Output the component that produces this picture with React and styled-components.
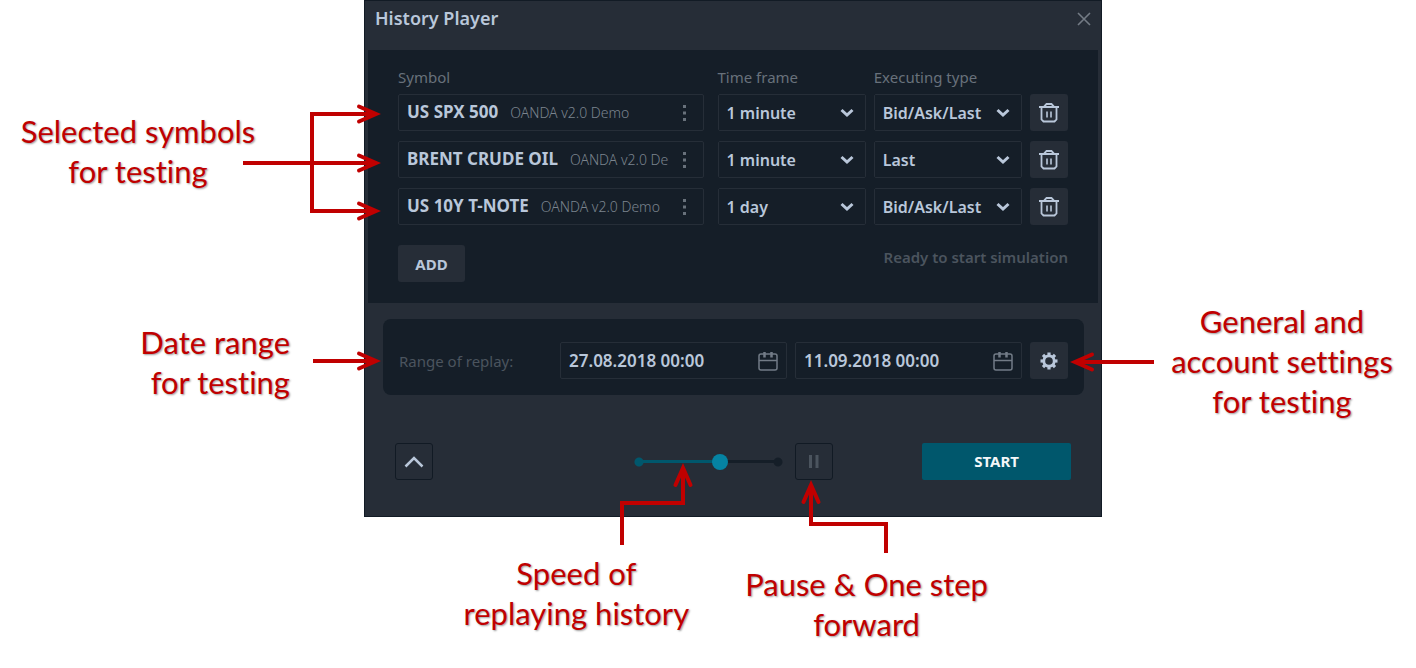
import React, { useState } from "react";
import styled, { createGlobalStyle, css } from "styled-components";

const c = {
  shell: "#262d37",
  well: "#151e28",
  line: "#262e38",
  text: "#b9c7da",
  muted: "#68717b",
  broker: "#7b848e",
  dim: "#4b545e",
  teal: "#00576c",
  thumb: "#0583a3",
  red: "#c00000",
};

const Global = createGlobalStyle`
  * { box-sizing: border-box; }
  body { margin: 0; background: #fff; }
  button, input, select { font: inherit; color: inherit; }
`;

const Page = styled.main`
  display: grid;
  grid-template-columns: minmax(0, 364fr) minmax(0, 738fr) minmax(0, 314fr);
  color: ${c.red};
  font-family: Lato, "Liberation Sans", sans-serif;
`;

const LeftNotes = styled.div`
  position: relative;
  display: flex;
  flex-direction: column;
  gap: 131px;
  padding-top: 111px;
`;

const RightNotes = styled.div`
  position: relative;
  padding: 301px 0 0 46px;
`;

const BottomNotes = styled.div`
  display: flex;
  justify-content: flex-end;
  gap: 56px;
  padding: 36px 114px 0 0;
`;

const Note = styled.p`
  margin: 0;
  padding-right: ${(p) => p.$inset || 0}px;
  padding-top: ${(p) => p.$drop || 0}px;
  text-align: ${(p) => p.$align || "center"};
  font-size: 31px;
  line-height: 40px;
  font-variant-ligatures: none;
  white-space: nowrap;
  text-shadow: 1px 1px 2px rgba(0, 0, 0, 0.4);
`;

const ArrowSvg = styled.svg`
  position: absolute;
  z-index: 2;
  overflow: visible;
  pointer-events: none;
  fill: none;
  stroke: ${c.red};
  stroke-width: 4;
  ${(p) => p.$at}
`;

const Panel = styled.section`
  border: 1px solid #121b25;
  background: ${c.shell};
  color: ${c.text};
  font-family: "Noto Sans", "Open Sans", sans-serif;
  font-size: 16px;
  font-weight: 600;
`;

const Header = styled.header`
  display: flex;
  justify-content: space-between;
  align-items: flex-start;
  height: 49px;
  padding: 5px 10px 0;
`;

const Title = styled.h1`
  margin: 0;
  font-size: 18px;
  line-height: 24px;
  font-weight: 600;
`;

const CloseButton = styled.button`
  display: flex;
  padding: 6px 0;
  border: 0;
  background: none;
  color: #737b85;
`;

const Symbols = styled.div`
  margin: 0 3px;
  padding: 16px 30px 21px;
  background: ${c.well};
`;

const Row = styled.div`
  display: grid;
  grid-template-columns: minmax(0, 311fr) minmax(0, 148fr) minmax(0, 148fr) 38px;
  column-gap: 8px;
  & + & { margin-top: 10px; }
  & > :first-child { margin-right: 6px; }
`;

const HeadRow = styled(Row)`
  margin-bottom: 6px;
  color: ${c.muted};
  font-size: 15px;
  line-height: 22px;
  font-weight: 400;
  & + ${Row} { margin-top: 0; }
`;

const box = css`
  height: 37px;
  border: 1px solid ${c.line};
  border-radius: 2px;
`;

const SymbolField = styled.div`
  ${box}
  display: flex;
  align-items: center;
  padding: 0 12px 0 8px;
`;

const SymbolText = styled.div`
  flex: 1;
  overflow: hidden;
  white-space: nowrap;
  font-weight: 700;
  font-size: 17px;
  line-height: 26px;
`;

const Broker = styled.span`
  margin-left: 12px;
  color: ${c.broker};
  font-size: 14px;
  font-weight: 300;
`;

const MoreButton = styled.button`
  display: flex;
  margin-left: 10px;
  padding: 4px;
  border: 0;
  background: none;
  color: ${c.muted};
`;

const SelectWrap = styled.div`
  ${box}
  position: relative;
  svg {
    position: absolute;
    right: 11px;
    top: 13px;
    pointer-events: none;
  }
`;

const Select = styled.select`
  width: 100%;
  height: 100%;
  padding: 0 8px;
  border: 0;
  background: ${c.well};
  appearance: none;
`;

const SquareButton = styled.button`
  display: flex;
  flex: none;
  align-items: center;
  justify-content: center;
  width: 38px;
  height: 37px;
  padding: 0;
  border: ${(p) => (p.$outlined ? "1px solid #111a24" : "0")};
  border-radius: 3px;
  background: ${c.shell};
  color: ${(p) => (p.$dim ? c.dim : c.text)};
`;

const SymbolsFoot = styled.div`
  display: flex;
  justify-content: space-between;
  align-items: flex-start;
  margin-top: 20px;
`;

const AddButton = styled.button`
  width: 67px;
  height: 37px;
  padding: 0;
  border: 0;
  border-radius: 3px;
  background: ${c.shell};
  font-size: 15px;
  font-weight: 700;
`;

const Status = styled.output`
  color: ${c.dim};
  font-size: 15px;
  line-height: 24px;
`;

const Range = styled.div`
  display: flex;
  align-items: center;
  gap: 8px;
  margin: 16px 17px 0 18px;
  padding: 23px 16px 16px;
  border-radius: 8px;
  background: ${c.well};
`;

const RangeLabel = styled.span`
  flex: 1;
  color: ${c.dim};
  font-size: 15px;
  font-weight: 400;
  white-space: nowrap;
`;

const DateField = styled.div`
  ${box}
  display: flex;
  flex: 0 1 227px;
  align-items: center;
  min-width: 0;
  padding: 0 8px;
`;

const DateInput = styled.input`
  flex: 1;
  min-width: 0;
  padding: 0;
  border: 0;
  background: none;
  font-size: 17px;
`;

const IconButton = styled.button`
  display: flex;
  padding: 0;
  border: 0;
  background: none;
  color: #727b86;
`;

const Footer = styled.footer`
  display: flex;
  align-items: center;
  padding: 48px 30px 36px;
`;

const Player = styled.div`
  display: flex;
  align-items: center;
  gap: 12px;
  margin: 0 89px 0 auto;
`;

const Anchor = styled.div`
  position: relative;
  display: flex;
`;

const Speed = styled.input`
  --at: calc(8px + (100% - 16px) * var(--v));
  width: 149px;
  height: 16px;
  margin: 0;
  appearance: none;
  background:
    radial-gradient(circle at 5px 50%, ${c.teal} 4px, transparent 5px),
    radial-gradient(circle at calc(100% - 5px) 50%, ${c.well} 4px, transparent 5px),
    linear-gradient(90deg, transparent 5px, ${c.teal} 5px var(--at), ${c.well} var(--at) calc(100% - 5px), transparent calc(100% - 5px))
      center / 100% 3px no-repeat;
  &::-webkit-slider-thumb {
    appearance: none;
    width: 16px;
    height: 16px;
    border-radius: 50%;
    background: ${c.thumb};
  }
`;

const StartButton = styled.button`
  width: 149px;
  height: 37px;
  padding: 0 0 2px;
  border: 0;
  border-radius: 2px;
  background: ${c.teal};
  color: #f4f7f9;
  font-size: 15px;
  font-weight: 700;
`;

const Chevron = () => (
  <svg width="14" height="10" viewBox="0 0 14 10" fill="none" stroke={c.text} strokeWidth="3" aria-hidden="true">
    <path d="M1.500 2 7 7l5.500-5" />
  </svg>
);

const Trash = () => (
  <svg width="20" height="20" viewBox="0 0 20 20" fill="none" stroke="currentColor" strokeWidth="1.800" aria-hidden="true">
    <path d="M0 4h20M5.500 4V3l2-2h5l2 2v1M2.500 4.500v12l2 2h11l2-2v-12" />
    <path d="M8 8.500v6M12 8.500v6" strokeWidth="1.600" />
  </svg>
);

const Calendar = () => (
  <svg width="20" height="20" viewBox="0 0 20 20" fill="none" stroke="currentColor" strokeWidth="1.500" aria-hidden="true">
    <rect x="1" y="3" width="18" height="16" rx="2" />
    <path d="M1 9.500h18" />
    <path d="M6.500 1v5.500M13.500 1v5.500" strokeWidth="2.500" />
  </svg>
);

const Gear = () => (
  <svg width="18" height="18" viewBox="-9 -9 18 18" fill="none" stroke="currentColor" aria-hidden="true">
    <circle r="5.200" strokeWidth="2.800" />
    {[0, 45, 90, 135, 180, 225, 270, 315].map((a) => (
      <path key={a} d="M0-5.500V-8.500" strokeWidth="3.200" transform={`rotate(${a})`} />
    ))}
  </svg>
);

const Head = ({ x, y, turn = 0 }) => (
  <path
    d="M-22-7.500-5 0-22 7.500M-10 0h4"
    strokeLinecap="round"
    strokeMiterlimit="10"
    transform={`translate(${x} ${y}) rotate(${turn})`}
  />
);

const ROWS = [
  { name: "US SPX 500", frame: "1 minute", type: "Bid/Ask/Last" },
  { name: "BRENT CRUDE OIL", frame: "1 minute", type: "Last" },
  { name: "US 10Y T-NOTE", frame: "1 day", type: "Bid/Ask/Last" },
];

function Picker({ value, options, labelledBy }) {
  return (
    <SelectWrap>
      <Select defaultValue={value} aria-labelledby={labelledBy}>
        {options.map((o) => (
          <option key={o}>{o}</option>
        ))}
      </Select>
      <Chevron />
    </SelectWrap>
  );
}

function SymbolRow({ name, frame, type }) {
  return (
    <Row>
      <SymbolField>
        <SymbolText>
          {name}
          <Broker>OANDA v2.0 Demo</Broker>
        </SymbolText>
        <MoreButton aria-label="Choose symbol">
          <svg width="4" height="16" viewBox="0 0 4 16" fill="currentColor" aria-hidden="true">
            <path d="M0 0h3v3H0zM0 6.500h3v3H0zM0 13h3v3H0z" />
          </svg>
        </MoreButton>
      </SymbolField>
      <Picker value={frame} options={["1 minute", "1 day"]} labelledBy="col-frame" />
      <Picker value={type} options={["Bid/Ask/Last", "Last"]} labelledBy="col-type" />
      <SquareButton aria-label="Remove symbol">
        <Trash />
      </SquareButton>
    </Row>
  );
}

function DateBox({ value, label }) {
  return (
    <DateField>
      <DateInput defaultValue={value} aria-label={label} />
      <IconButton aria-label="Open calendar">
        <Calendar />
      </IconButton>
    </DateField>
  );
}

export default function App() {
  const [speed, setSpeed] = useState(59);
  return (
    <Page>
      <Global />
      <LeftNotes>
        <Note $inset={88}>
          Selected symbols
          <br />
          for testing
        </Note>
        <Note $inset={74} $align="right">
          Date range
          <br />
          for testing
        </Note>
        <ArrowSvg $at="right: -20px; top: 100px;" width="144" height="280" viewBox="240 100 144 280" aria-hidden="true">
          <path d="M376 114H312V211H376M243 163H376M313 361H376" />
          <Head x={381} y={114} />
          <Head x={381} y={163} />
          <Head x={381} y={211} />
          <Head x={381} y={361} />
        </ArrowSvg>
      </LeftNotes>

      <div>
        <Panel aria-label="History Player">
          <Header>
            <Title>History Player</Title>
            <CloseButton aria-label="Close">
              <svg width="14" height="14" viewBox="0 0 14 14" fill="none" stroke="currentColor" strokeWidth="1.600" aria-hidden="true">
                <path d="M1 1l12 12M13 1 1 13" />
              </svg>
            </CloseButton>
          </Header>
          <Symbols>
            <HeadRow>
              <span>Symbol</span>
              <span id="col-frame">Time frame</span>
              <span id="col-type">Executing type</span>
            </HeadRow>
            {ROWS.map((r) => (
              <SymbolRow key={r.name} {...r} />
            ))}
            <SymbolsFoot>
              <AddButton>ADD</AddButton>
              <Status>Ready to start simulation</Status>
            </SymbolsFoot>
          </Symbols>
          <Range>
            <RangeLabel>Range of replay:</RangeLabel>
            <DateBox value="27.08.2018 00:00" label="Replay from" />
            <DateBox value="11.09.2018 00:00" label="Replay to" />
            <SquareButton aria-label="Settings">
              <Gear />
            </SquareButton>
          </Range>
          <Footer>
            <SquareButton $outlined aria-label="Collapse">
              <svg width="20" height="12" viewBox="0 0 20 12" fill="none" stroke="currentColor" strokeWidth="2.500" aria-hidden="true">
                <path d="M1.500 10.500 10 2l8.500 8.500" />
              </svg>
            </SquareButton>
            <Player>
              <Anchor>
                <Speed
                  type="range"
                  aria-label="Replay speed"
                  value={speed}
                  onChange={(e) => setSpeed(Number(e.target.value))}
                  style={{ "--v": speed / 100 }}
                />
                <ArrowSvg $at="left: -14px; top: 8px;" width="80" height="84" viewBox="620 462 80 84" aria-hidden="true">
                  <path d="M683 468V503H622V545" />
                  <Head x={683} y={463} turn={-90} />
                </ArrowSvg>
              </Anchor>
              <Anchor>
                <SquareButton $outlined $dim aria-label="Pause">
                  <svg width="10" height="13" viewBox="0 0 10 13" fill="currentColor" aria-hidden="true">
                    <path d="M0 0h3v13H0zM6.500 0h3v13h-3z" />
                  </svg>
                </SquareButton>
                <ArrowSvg $at="left: 5px; top: 37px;" width="88" height="74" viewBox="800 480 88 74" aria-hidden="true">
                  <path d="M811 485V524H886V553" />
                  <Head x={811} y={480} turn={-90} />
                </ArrowSvg>
              </Anchor>
            </Player>
            <StartButton>START</StartButton>
          </Footer>
        </Panel>
        <BottomNotes>
          <Note>
            Speed of
            <br />
            replaying history
          </Note>
          <Note $drop={11}>
            Pause &amp; One step
            <br />
            forward
          </Note>
        </BottomNotes>
      </div>

      <RightNotes>
        <Note>
          General and
          <br />
          account settings
          <br />
          for testing
        </Note>
        <ArrowSvg $at="left: -36px; top: 350px;" width="90" height="24" viewBox="1066 350 90 24" aria-hidden="true">
          <path d="M1154 362H1076" />
          <Head x={1070} y={362} turn={180} />
        </ArrowSvg>
      </RightNotes>
    </Page>
  );
}
